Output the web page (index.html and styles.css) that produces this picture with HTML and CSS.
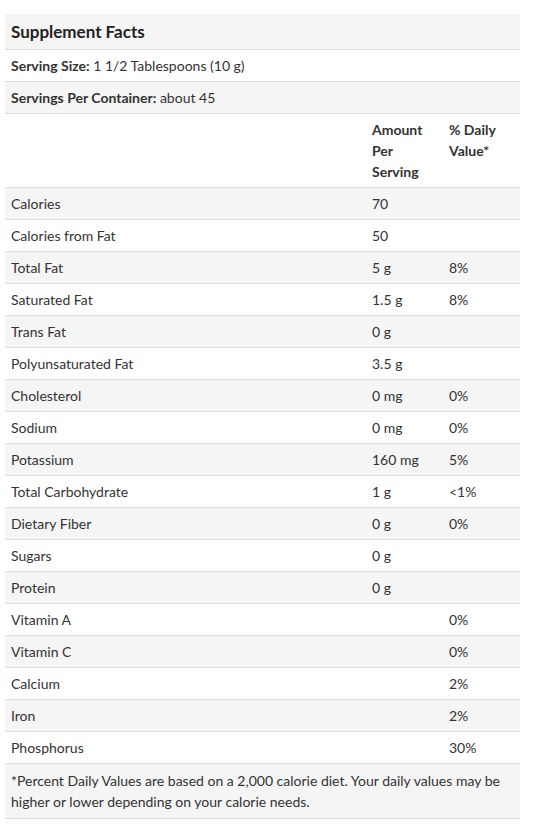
FILE: index.html
```html
<!DOCTYPE html>
<html>
<head>
<meta charset="utf-8">
<link rel="stylesheet" href="styles.css">
</head>
<body>
<div class="wrap">
<table class="facts">
  <colgroup>
    <col class="c-name">
    <col class="c-amt">
    <col class="c-dv">
  </colgroup>
  <tbody>
    <tr class="gray title-row"><th colspan="3" class="title">Supplement Facts</th></tr>
    <tr><td colspan="3"><b>Serving Size:</b> 1 1/2 Tablespoons (10 g)</td></tr>
    <tr class="gray"><td colspan="3"><b>Servings Per Container:</b> about 45</td></tr>
    <tr class="head"><td></td><th>Amount Per Serving</th><th>% Daily Value*</th></tr>
    <tr class="gray"><td>Calories</td><td>70</td><td></td></tr>
    <tr><td>Calories from Fat</td><td>50</td><td></td></tr>
    <tr class="gray"><td>Total Fat</td><td>5 g</td><td>8%</td></tr>
    <tr><td>Saturated Fat</td><td>1.5 g</td><td>8%</td></tr>
    <tr class="gray"><td>Trans Fat</td><td>0 g</td><td></td></tr>
    <tr><td>Polyunsaturated Fat</td><td>3.5 g</td><td></td></tr>
    <tr class="gray"><td>Cholesterol</td><td>0 mg</td><td>0%</td></tr>
    <tr><td>Sodium</td><td>0 mg</td><td>0%</td></tr>
    <tr class="gray"><td>Potassium</td><td>160 mg</td><td>5%</td></tr>
    <tr><td>Total Carbohydrate</td><td>1 g</td><td>&lt;1%</td></tr>
    <tr class="gray"><td>Dietary Fiber</td><td>0 g</td><td>0%</td></tr>
    <tr><td>Sugars</td><td>0 g</td><td></td></tr>
    <tr class="gray"><td>Protein</td><td>0 g</td><td></td></tr>
    <tr><td>Vitamin A</td><td></td><td>0%</td></tr>
    <tr class="gray"><td>Vitamin C</td><td></td><td>0%</td></tr>
    <tr><td>Calcium</td><td></td><td>2%</td></tr>
    <tr class="gray"><td>Iron</td><td></td><td>2%</td></tr>
    <tr><td>Phosphorus</td><td></td><td>30%</td></tr>
    <tr class="gray foot"><td colspan="3">*Percent Daily Values are based on a 2,000 calorie diet. Your daily values may be higher or lower depending on your calorie needs.</td></tr>
  </tbody>
</table>
</div>
</body>
</html>
```

FILE: styles.css
```css
html, body {
  margin: 0;
  padding: 0;
  background: #fff;
}
body {
  font-family: Lato, "Open Sans", sans-serif;
  font-size: 14px;
  line-height: 21px;
  color: #333;
}
.wrap {
  padding: 14px 18px 0 5px;
}
.facts {
  width: 515px;
  border-collapse: collapse;
  table-layout: fixed;
}
.c-name { width: 361px; }
.c-amt { width: 77px; }
.c-dv { width: 77px; }
.facts td, .facts th {
  padding: 5px 6px;
  border-bottom: 1px solid #dcdcdc;
  text-align: left;
  vertical-align: top;
  font-weight: normal;
}
.facts b, .facts .head th {
  font-weight: bold;
  color: #333;
}
.gray td, .gray th {
  background: #f5f5f5;
}
.facts .title {
  padding: 6px 6px 5px;
  font-size: 17px;
  line-height: 24px;
  font-weight: bold;
  color: #222;
}
.foot td {
  padding-top: 6px;
  padding-bottom: 6px;
}
```
